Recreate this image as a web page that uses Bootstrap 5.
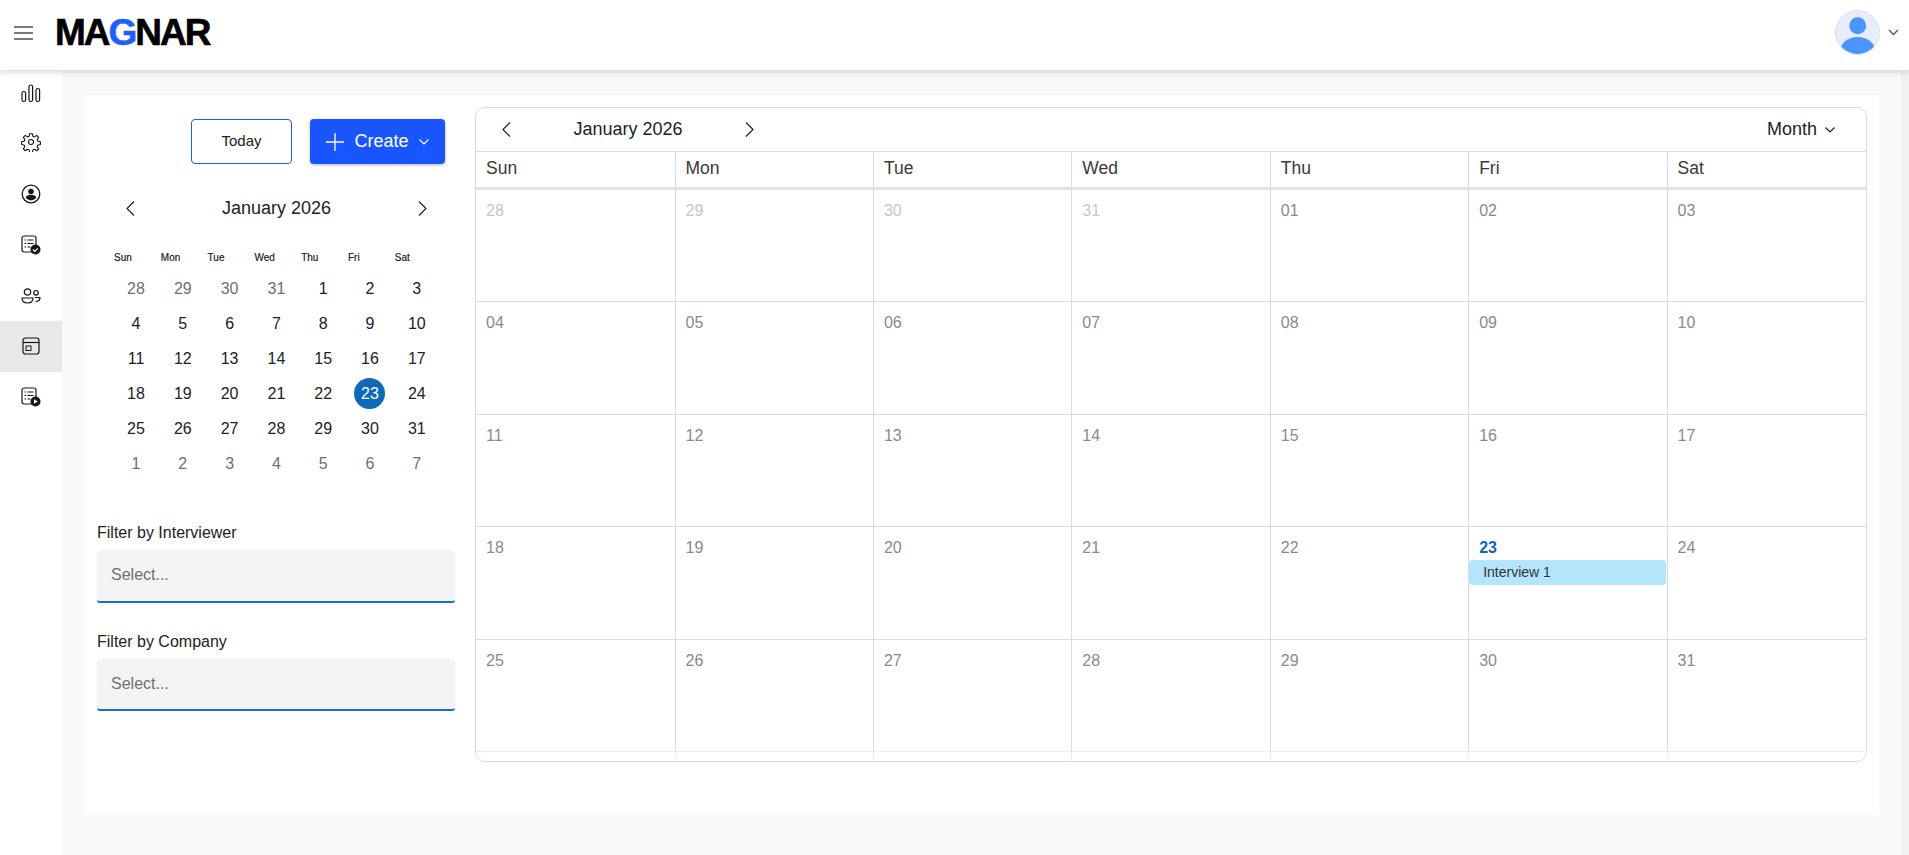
<!DOCTYPE html>
<html lang="en"><head><meta charset="utf-8"><title>Calendar</title>
<link href="https://cdn.jsdelivr.net/npm/bootstrap@5.3.0/dist/css/bootstrap.min.css" rel="stylesheet">
<style>
html,body{height:855px;overflow:hidden}
body{font-family:"Liberation Sans",Arial,sans-serif;background:#fff;color:#222}
.hdr{height:70px;background:#fff;box-shadow:0 2px 6px rgba(0,0,0,.16);position:relative;z-index:2;padding:0 10px 5px 14px}
.burger{width:19px;height:14px;margin-right:22px;color:#525252}
.logo-txt{font-size:37px;font-weight:700;color:#000;letter-spacing:-2px;line-height:1;-webkit-text-stroke:.6px #000}
.logo-txt span{color:#1f5fff;-webkit-text-stroke:.6px #1f5fff}
.avatar{width:45px;height:45px;border-radius:50%;background:#e5edff;border:1px solid #e0e0e0;overflow:hidden}
.avatar svg{display:block}
.shell{height:785px}
.side{width:62px;background:#fff;flex:none;margin-top:-2.4px}
.side-item{height:50.7px;flex:none;color:#161616}
.side-item.now{background:#e8e8e8}
.side-item svg{width:20px;height:20px}
.side-item svg.gear-ico{margin-top:-3px}
.stage{background:#f9f9f9;flex:1 1 auto;padding:25px 22px 40px 22px;min-width:0}
.gutter{width:8px;background:#f1f1f1;flex:none}
.panel{background:#fff;height:720px;padding:12px 12px 0 13px;gap:20px}
.leftcol{width:358px;flex:none}
.btnrow{padding-top:12px;padding-right:10px;gap:18px}
.btn-today{width:101px;height:45px;border:1px solid #1f5fd8;border-radius:4px;background:#fff;font-size:15px;color:#222;padding:0}
.btn-create{width:135px;height:45px;background:#1a56ff;border:0;border-radius:4px;color:#fff;font-size:18px;padding:0;box-shadow:0 1px 3px rgba(0,0,0,.3)}
.plus-ico{margin-right:10px}
.caret-ico{margin-left:10px}
.mini-head{margin-top:31.5px;padding:0 28px 0 29px;font-size:18px;height:26px;color:#222}
.mini-grid{display:grid;grid-template-columns:repeat(7,46.8px);margin-top:28.5px}
.mini-dow{font-size:10px;height:21px;padding-left:17px;color:#222;-webkit-text-stroke:.2px #222;white-space:nowrap}
.mini-day{height:35px;font-size:16px;color:#222;padding-left:23.5px}
.mini-day b{font-weight:400;display:flex;flex:none;width:31px;height:31px;align-items:center;justify-content:center}
.mini-day.dim{color:#6f6f6f}
.mini-day.sel b{background:#1068b8;color:#fff;border-radius:50%}
.flabel{font-size:16px;color:#222;line-height:18px;margin:0 0 7.5px 0}
.fselect{height:53px;width:358px;background:#f4f4f4;border:0;border-bottom:2px solid #1470c4;border-radius:6px 6px 3px 3px;font-size:16px;color:#6f6f6f;padding-left:14px}
.filters{margin-top:43px}
.fblock+.fblock{margin-top:30px}
.bigcal{flex:1 1 auto;height:655px;border:1px solid #dcdcdc;border-radius:10px;overflow:hidden;min-width:0;display:flex;flex-direction:column}
.bar{height:44px;flex:none;border-bottom:1px solid #dcdcdc;padding:0 31px 0 26px;font-size:18px;color:#222}
.bar .ttl{width:228px;text-align:center;margin:0 3px}
.wk{display:grid;grid-template-columns:199.5px repeat(6,1fr);flex:none}
.wk-h{height:37.5px;border-bottom:3px solid #e2e2e2;border-right:1px solid #dcdcdc;padding:3px 0 0 10px;font-size:17.5px;color:#393939}
.wk>div:nth-child(7n){border-right:0}
.wk-c{height:112.5px;border-bottom:1px solid #dcdcdc;border-right:1px solid #dcdcdc;padding:11px 0 0 10px;font-size:16px;color:#8a8a8a;line-height:20px}
.wk-c:nth-last-child(-n+7){border-bottom-color:#ececec}
.wk-c.faint{color:#c6c6c6}
.wk-c.cur{color:#1068b8;font-weight:700;padding-left:0;padding-right:1px}
.wk-c.cur i{font-style:normal;padding-left:10px;display:block}
.evt{background:#b3e5fc;border-radius:4px;height:25px;font-size:14px;font-weight:400;color:#333;padding-left:14px;line-height:24px;margin-top:2px}
.tailrow{height:10px}
.tailrow div{border-right:1px solid #ececec}
</style></head>
<body>
<header class="hdr d-flex align-items-center">
  <svg class="burger" viewBox="0 0 19 14" fill="none" stroke="currentColor" stroke-width="1.6"><path d="M0 1h19M0 7h19M0 13h19"/></svg>
  <div class="logo-txt">MA<span>G</span>NAR</div>
  <div class="ms-auto d-flex align-items-center gap-2">
    <div class="avatar"><svg viewBox="0 0 43 43" width="43" height="43"><circle cx="21.700" cy="14.700" r="8.500" fill="#4a96ff"/><ellipse cx="21.700" cy="39" rx="17" ry="13" fill="#4a96ff"/></svg></div>
    <svg width="11" height="7" viewBox="0 0 11 7" fill="none" stroke="#525252" stroke-width="1.300"><path d="M1 1l4.500 4.500L10 1"/></svg>
  </div>
</header>
<div class="shell d-flex">
  <nav class="side d-flex flex-column">
    <div class="side-item d-flex align-items-center justify-content-center"><svg viewBox="0 0 20 20" fill="none" stroke="currentColor" stroke-width="1.200"><rect x="1" y="8.500" width="3.600" height="10" rx="1.800"/><rect x="8" y="2" width="3.600" height="16.500" rx="1.800"/><rect x="15" y="5.500" width="3.600" height="13" rx="1.800"/></svg></div>
    <div class="side-item d-flex align-items-center justify-content-center"><svg class="gear-ico" viewBox="0 0 24 24" fill="none" stroke="currentColor" stroke-width="1.300"><circle cx="12" cy="12" r="3"/><path d="M10.300 2h3.400l.5 3 2.100.9 2.500-1.800 2.400 2.400-1.800 2.500.9 2.100 3 .5v3.400l-3 .5-.9 2.100 1.800 2.500-2.400 2.400-2.500-1.800-2.100.9-.5 3h-3.400l-.5-3-2.100-.9-2.500 1.800-2.400-2.400 1.800-2.500-.9-2.100-3-.5v-3.400l3-.5.9-2.100-1.800-2.500 2.400-2.400 2.500 1.800 2.100-.9z" stroke-linejoin="round"/></svg></div>
    <div class="side-item d-flex align-items-center justify-content-center"><svg viewBox="0 0 20 20"><circle cx="10" cy="10" r="8.800" fill="none" stroke="currentColor" stroke-width="1.300"/><circle cx="10" cy="7.500" r="2.800" fill="currentColor"/><path d="M4.600 13.500c1-2 3-2.700 5.400-2.700s4.400.7 5.400 2.700a6.500 6.500 0 0 1-10.800 0z" fill="currentColor"/></svg></div>
    <div class="side-item d-flex align-items-center justify-content-center"><svg viewBox="0 0 20 20"><rect x="1" y="1" width="14" height="16" rx="2" fill="none" stroke="currentColor" stroke-width="1.200"/><path d="M3.500 5h1.500M6.500 5h6M3.500 8.500h1.500M6.500 8.500h6M3.500 12h1.500M6.500 12h3" stroke="currentColor" stroke-width="1.100"/><circle cx="14.500" cy="14.500" r="5" fill="currentColor"/><path d="M12 14.500l1.800 1.800 3-3" stroke="#fff" stroke-width="1.200" fill="none"/></svg></div>
    <div class="side-item d-flex align-items-center justify-content-center"><svg viewBox="0 0 20 20" fill="none" stroke="currentColor" stroke-width="1.200"><circle cx="6.500" cy="6" r="3.200"/><circle cx="15" cy="6.800" r="2.300"/><path d="M1 12h11c0 3-2.200 5-5.500 5S1 15 1 12z"/><path d="M14 11.500h5c0 2.500-1.800 4-4.500 4"/></svg></div>
    <div class="side-item now d-flex align-items-center justify-content-center"><svg viewBox="0 0 20 20" fill="none" stroke="currentColor" stroke-width="1.200"><rect x="2" y="2" width="16" height="16" rx="2.500"/><path d="M2 6.500h16"/><rect x="5" y="10" width="5" height="4.500" stroke-width="1"/></svg></div>
    <div class="side-item d-flex align-items-center justify-content-center"><svg viewBox="0 0 20 20"><rect x="1" y="1" width="14" height="16" rx="2" fill="none" stroke="currentColor" stroke-width="1.200"/><path d="M3.500 5h1.500M6.500 5h6M3.500 8.500h1.500M6.500 8.500h6M3.500 12h1.500M6.500 12h3" stroke="currentColor" stroke-width="1.100"/><circle cx="14.500" cy="14.500" r="5" fill="currentColor"/><path d="M13 12.200v4.600l3.800-2.300z" fill="#fff"/></svg></div>
  </nav>
  <main class="stage">
    <div class="panel d-flex">
      <section class="leftcol">
        <div class="btnrow d-flex justify-content-end">
          <button class="btn-today" type="button">Today</button>
          <button class="btn-create d-flex align-items-center justify-content-center" type="button">
            <svg width="18" height="18" viewBox="0 0 18 18" fill="none" stroke="#fff" stroke-width="1.300" class="plus-ico"><path d="M9 0v18M0 9h18"/></svg>Create
            <svg width="10" height="6" viewBox="0 0 10 6" fill="none" stroke="#fff" stroke-width="1.200" class="caret-ico"><path d="M.5.5l4.500 4.500L9.500.5"/></svg>
          </button>
        </div>
        <div class="mini-head d-flex align-items-center justify-content-between">
          <svg width="9" height="15" viewBox="0 0 9 15" fill="none" stroke="#222" stroke-width="1.200"><path d="M8 .5l-7 7 7 7"/></svg>
          <span>January 2026</span>
          <svg width="9" height="15" viewBox="0 0 9 15" fill="none" stroke="#222" stroke-width="1.200"><path d="M1 .5l7 7-7 7"/></svg>
        </div>
        <div class="mini-grid" id="mini"></div>
        <div class="filters">
          <div class="fblock"><div class="flabel">Filter by Interviewer</div><div class="fselect d-flex align-items-center">Select...</div></div>
          <div class="fblock"><div class="flabel">Filter by Company</div><div class="fselect d-flex align-items-center">Select...</div></div>
        </div>
      </section>
      <section class="bigcal">
        <div class="bar d-flex align-items-center">
          <svg width="9" height="15" viewBox="0 0 9 15" fill="none" stroke="#222" stroke-width="1.200"><path d="M8 .5l-7 7 7 7"/></svg>
          <span class="ttl">January 2026</span>
          <svg width="9" height="15" viewBox="0 0 9 15" fill="none" stroke="#222" stroke-width="1.200"><path d="M1 .5l7 7-7 7"/></svg>
          <span class="ms-auto">Month</span>
          <svg class="ms-2" width="10" height="6" viewBox="0 0 10 6" fill="none" stroke="#222" stroke-width="1.200"><path d="M.5.5l4.500 4.500L9.500.5"/></svg>
        </div>
        <div class="wk" id="big"></div>
        <div class="wk tailrow"><div></div><div></div><div></div><div></div><div></div><div></div><div></div></div>
      </section>
    </div>
  </main>
  <div class="gutter"></div>
</div>
<script>
var dows=['Sun','Mon','Tue','Wed','Thu','Fri','Sat'];
var mini=document.getElementById('mini'),big=document.getElementById('big'),h='',g='';
dows.forEach(function(d){h+='<div class="mini-dow">'+d+'</div>';g+='<div class="wk-h">'+d+'</div>';});
var days=[];[28,29,30,31].forEach(function(n){days.push([n,1]);});
for(var i=1;i<=31;i++)days.push([i,0]);
for(var j=1;j<=7;j++)days.push([j,1]);
days.forEach(function(x){var c='mini-day d-flex align-items-center'+(x[1]?' dim':'')+(!x[1]&&x[0]==23?' sel':'');h+='<div class="'+c+'"><b>'+x[0]+'</b></div>';});
days.slice(0,35).forEach(function(x,k){var t=(x[0]<10?'0':'')+x[0];
 if(!x[1]&&x[0]==23)g+='<div class="wk-c cur"><i>23</i><div class="evt">Interview 1</div></div>';
 else g+='<div class="wk-c'+(x[1]?' faint':'')+'">'+t+'</div>';});
mini.innerHTML=h;big.innerHTML=g;
</script>
<script src="https://cdn.jsdelivr.net/npm/bootstrap@5.3.0/dist/js/bootstrap.bundle.min.js"></script>
</body></html>
